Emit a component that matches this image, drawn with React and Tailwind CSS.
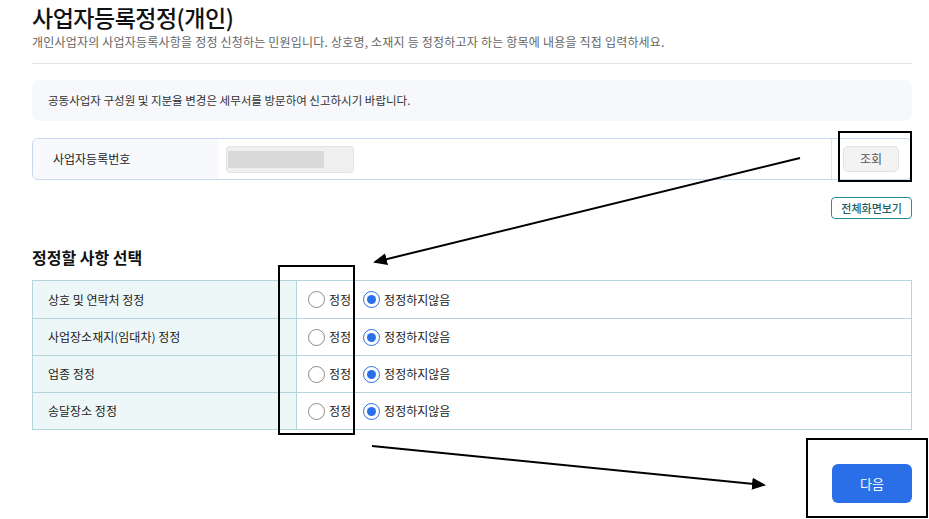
const rows = [
  '상호 및 연락처 정정',
  '사업장소재지(임대차) 정정',
  '업종 정정',
  '송달장소 정정',
]

function Radio({ checked }) {
  return (
    <span
      className={`flex h-[17px] w-[17px] shrink-0 items-center justify-center rounded-full border bg-white ${
        checked ? 'border-[#2a6fe8]' : 'border-[#8a8a8a]'
      }`}
    >
      {checked && <span className="h-[9px] w-[9px] rounded-full bg-[#2a6fe8]" />}
    </span>
  )
}

export default function App() {
  return (
    <div
      className="relative h-[519px] w-[929px] overflow-hidden bg-white text-[#222]"
      style={{ fontFamily: '"Noto Sans CJK KR", "Noto Sans", sans-serif' }}
    >
      <div className="ml-[32px] mr-[17px] pt-[1px]">
        <h1 className="text-[23px] font-medium leading-[32px] tracking-[-0.5px] text-[#111]">
          사업자등록정정(개인)
        </h1>
        <p className="text-[12px] leading-[17px] tracking-[0.2px] text-[#666]">
          개인사업자의 사업자등록사항을 정정 신청하는 민원입니다. 상호명, 소재지 등 정정하고자 하는 항목에 내용을 직접 입력하세요.
        </p>
        <div className="mt-[13px] h-px bg-[#e4e4e4]" />

        <div className="mt-[16px] flex h-[41px] items-center rounded-[8px] bg-[#f6f8fc] px-[16px] text-[11.5px] text-[#333]">
          공동사업자 구성원 및 지분율 변경은 세무서를 방문하여 신고하시기 바랍니다.
        </div>

        <div className="mt-[17px] flex h-[42px] overflow-hidden rounded-[6px] border border-[#c6d7ef]">
          <div className="flex w-[185px] items-center bg-[#f7f9fd] pl-[20px] text-[12px] text-[#222]">
            사업자등록번호
          </div>
          <div className="flex flex-1 items-center pl-[8px]">
            <div className="flex h-[27px] w-[128px] items-center rounded-[4px] border border-[#e2e2e2] bg-[#f0f0f0]">
              <div className="ml-[1px] h-[17px] w-[96px] bg-[#d9d9d9]" />
            </div>
          </div>
          <div className="flex w-[80px] items-center border-l border-[#dfe6ef] pl-[11px]">
            <button className="h-[26px] w-[56px] rounded-[5px] border border-[#e3e3e3] bg-[#f3f3f3] text-[12px] text-[#555]">
              조회
            </button>
          </div>
        </div>

        <div className="mt-[17px] flex justify-end">
          <button className="h-[22px] rounded-[4px] border border-[#2d8c99] px-[9px] text-[11px] font-medium text-[#1d5f68]">
            전체화면보기
          </button>
        </div>

        <h2 className="mt-[26px] text-[16px] font-bold leading-[24px] text-[#111]">정정할 사항 선택</h2>

        <div className="mt-[11px] border border-[#b4d5da]">
          {rows.map((label, i) => (
            <div key={label} className={`flex h-[37px] ${i > 0 ? 'border-t border-[#b4d5da]' : ''}`}>
              <div className="flex w-[263px] items-center bg-[#eef7f7] pl-[15px] text-[12px] text-[#222]">
                {label}
              </div>
              <div className="flex flex-1 items-center border-l border-[#b4d5da] pl-[11px] text-[12px] text-[#222]">
                <label className="flex items-center gap-[4px]">
                  <Radio />
                  <span>정정</span>
                </label>
                <label className="ml-[12px] flex items-center gap-[4px]">
                  <Radio checked />
                  <span>정정하지않음</span>
                </label>
              </div>
            </div>
          ))}
        </div>

        <div className="mt-[34px] flex justify-end">
          <button className="h-[39px] w-[80px] rounded-[6px] bg-[#2a6fe8] text-[13px] text-white">다음</button>
        </div>
      </div>

      {/* annotation overlay */}
      <svg className="pointer-events-none absolute inset-0" width="929" height="519">
        <defs>
          <marker id="ah" markerWidth="8" markerHeight="8" refX="6" refY="4" orient="auto">
            <path d="M0,1 L7,4 L0,7 Z" fill="#000" />
          </marker>
        </defs>
        <rect x="839" y="132" width="72" height="49" fill="none" stroke="#000" strokeWidth="2" />
        <rect x="279" y="266" width="75" height="168" fill="none" stroke="#000" strokeWidth="2" />
        <rect x="807" y="439" width="120" height="78" fill="none" stroke="#000" strokeWidth="2" />
        <line x1="800" y1="158" x2="375" y2="262" stroke="#000" strokeWidth="2" markerEnd="url(#ah)" />
        <line x1="372" y1="446" x2="764" y2="485" stroke="#000" strokeWidth="2" markerEnd="url(#ah)" />
      </svg>
    </div>
  )
}
